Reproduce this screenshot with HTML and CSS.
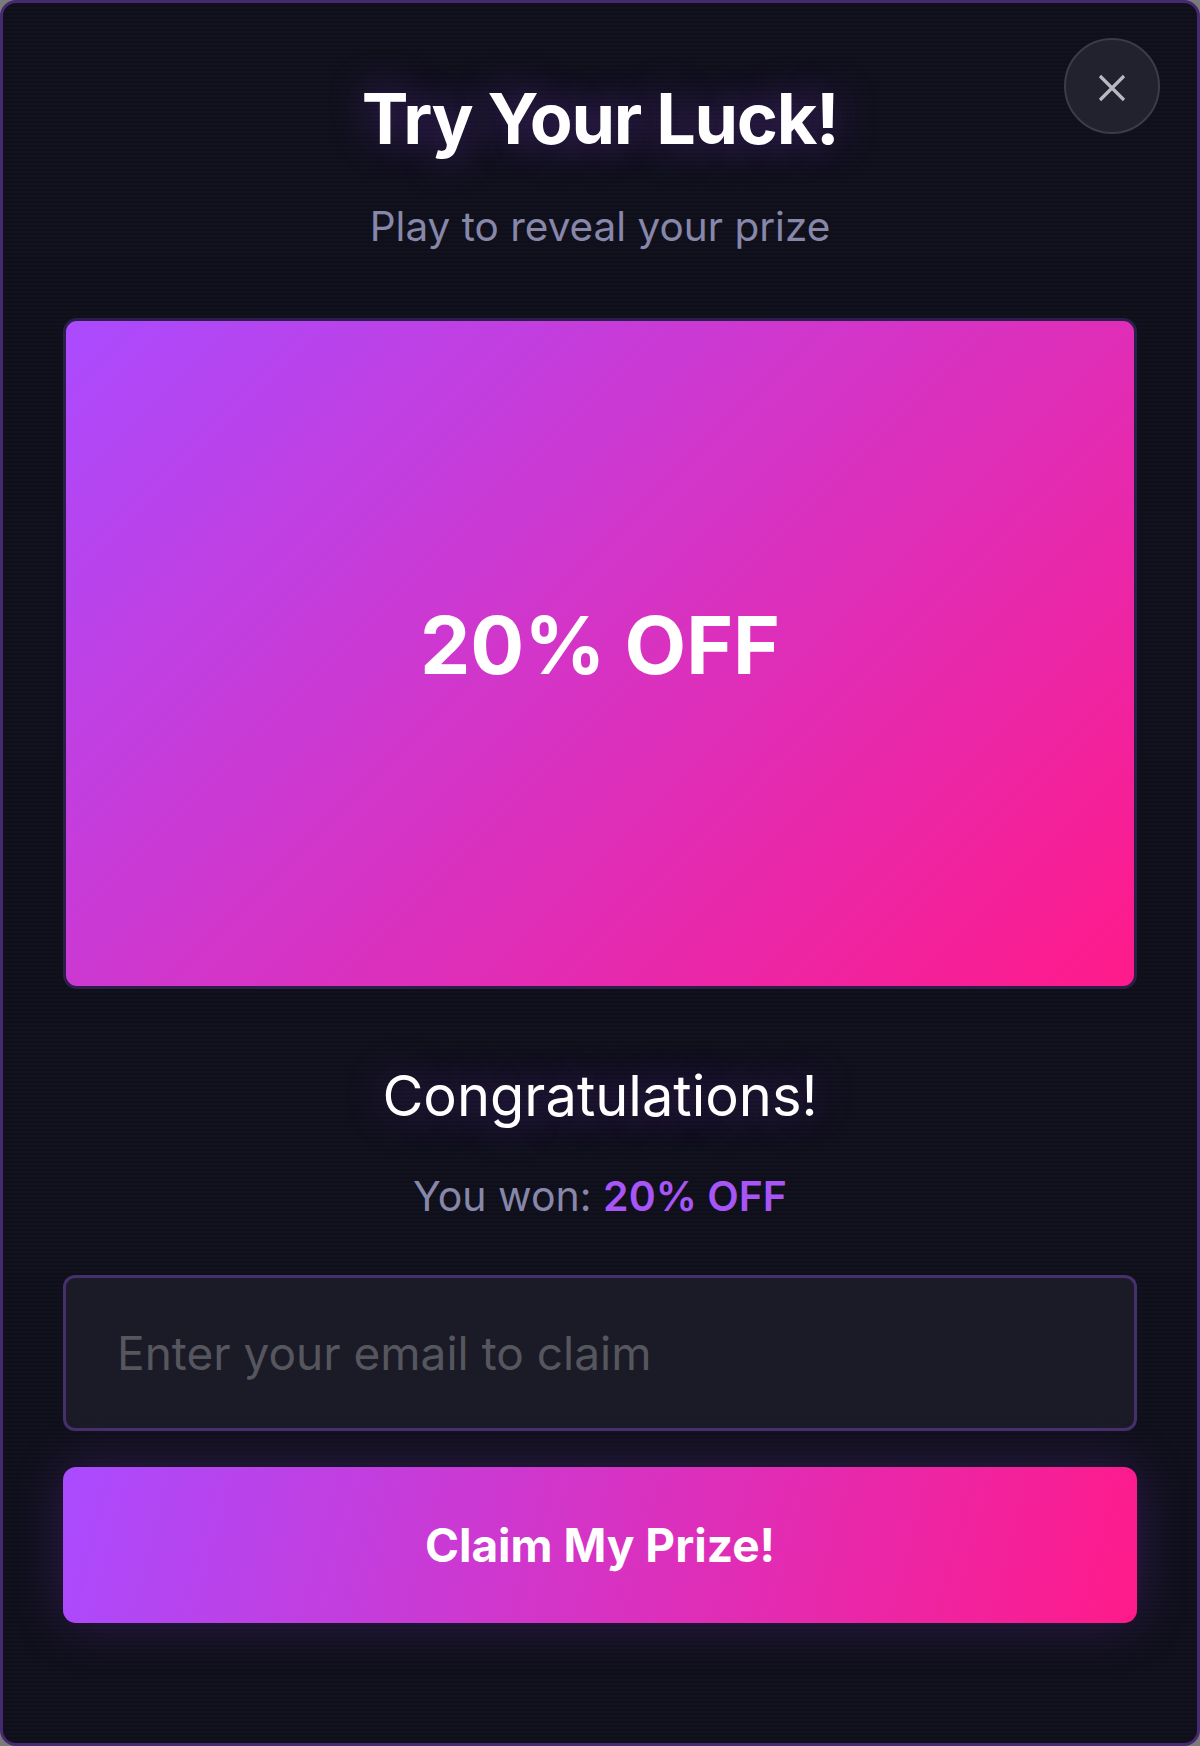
FILE: index.html
```html
<!DOCTYPE html>
<html lang="en">
<head>
<meta charset="utf-8">
<title>Try Your Luck</title>
<link rel="stylesheet" href="styles.css">
</head>
<body>
<div class="modal">
  <button class="close" aria-label="Close">
    <svg viewBox="0 0 28 28" width="28" height="28"><path d="M2 2 L26 26 M26 2 L2 26" stroke="#b9b9c2" stroke-width="3.2" stroke-linecap="butt" fill="none"/></svg>
  </button>
  <h1 class="title">Try Your Luck!</h1>
  <p class="subtitle">Play to reveal your prize</p>
  <div class="prize"><span class="prize-text">20% OFF</span></div>
  <h2 class="congrats">Congratulations!</h2>
  <p class="won">You won: <strong class="won-value">20% OFF</strong></p>
  <input class="email" type="email" placeholder="Enter your email to claim">
  <button class="claim">Claim My Prize!</button>
</div>
</body>
</html>
```
FILE: styles.css
```css
html, body {
  margin: 0;
  padding: 0;
}
body {
  background: #7a7a7a;
  font-family: "Inter", "Noto Sans", sans-serif;
}
.modal {
  position: relative;
  box-sizing: border-box;
  height: 100vh;
  display: flex;
  flex-direction: column;
  align-items: stretch;
  padding: 73px 60px 0;
  border: 3px solid #452a70;
  border-radius: 16px;
  background-color: #0f0f1b;
  background-image: repeating-linear-gradient(to bottom, rgba(255,255,255,0.012) 0 2px, rgba(0,0,0,0.02) 2px 4px);
  overflow: hidden;
}
.close {
  position: absolute;
  top: 35px;
  right: 37px;
  width: 96px;
  height: 96px;
  box-sizing: border-box;
  border-radius: 50%;
  border: 2px solid #3b3b4a;
  background: #22222e;
  display: flex;
  align-items: center;
  justify-content: center;
  padding: 0;
  padding-top: 4px;
}
.title {
  margin: 0;
  text-align: center;
  font-size: 70px;
  line-height: 86px;
  font-weight: 700;
  color: #ffffff;
  letter-spacing: -1.3px;
  text-shadow: 0 0 40px rgba(150, 70, 240, 0.45);
}
.subtitle {
  margin: 35px 0 0;
  text-align: center;
  font-size: 40.5px;
  line-height: 60px;
  color: #8787aa;
}
.prize {
  margin-top: 61px;
  box-sizing: border-box;
  height: 671px;
  border: 3px solid #2b1e48;
  border-radius: 14px;
  background: linear-gradient(135deg, #aa4bff 0%, #d633c4 50%, #ff1a8a 100%);
  display: flex;
  align-items: center;
  justify-content: center;
}
.prize-text {
  font-size: 80px;
  font-weight: 700;
  color: #ffffff;
  line-height: 1;
  margin-bottom: 18px;
}
.congrats {
  margin: 71px 0 0;
  text-align: center;
  font-size: 56px;
  line-height: 72px;
  font-weight: 400;
  color: #ffffff;
  text-shadow: 0 0 40px rgba(150, 70, 240, 0.45);
}
.won {
  margin: 34px 0 0;
  text-align: center;
  font-size: 41px;
  line-height: 60px;
  color: #8787aa;
}
.won-value {
  color: #a855f7;
  font-weight: 600;
}
.email {
  margin-top: 49px;
  box-sizing: border-box;
  height: 156px;
  width: 100%;
  border: 3.5px solid #45306c;
  border-radius: 12px;
  background: #1b1b27;
  padding: 0 51px;
  font-family: "Inter", "Noto Sans", sans-serif;
  font-size: 46px;
  color: #ffffff;
  outline: none;
}
.email::placeholder {
  color: #56565e;
}
.claim {
  margin-top: 36px;
  box-sizing: border-box;
  height: 156px;
  width: 100%;
  border: none;
  border-radius: 13px;
  background: linear-gradient(105deg, #aa4bff 0%, #d633c4 50%, #ff1a8a 100%);
  box-shadow: 0 0 50px rgba(140, 60, 220, 0.25);
  font-family: "Inter", "Noto Sans", sans-serif;
  font-size: 46px;
  font-weight: 700;
  color: #ffffff;
}
```
